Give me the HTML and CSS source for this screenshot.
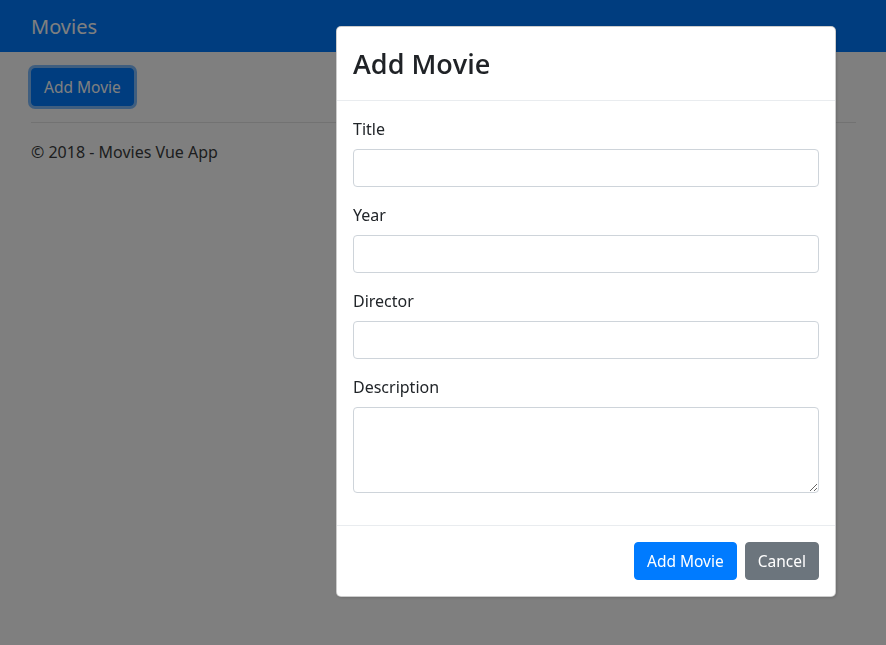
FILE: index.html
```html
<!DOCTYPE html>
<html lang="en">
<head>
<meta charset="utf-8">
<title>Movies Vue App</title>
<link rel="stylesheet" href="styles.css">
</head>
<body>
<nav class="navbar">
  <span class="brand">Movies</span>
</nav>
<main class="page">
  <button class="btn btn-primary btn-focus" type="button">Add Movie</button>
  <hr class="rule">
  <footer class="footer">© 2018 - Movies Vue App</footer>
</main>

<div class="backdrop"></div>
<div class="modal">
  <div class="modal-content">
    <div class="modal-header">
      <h2 class="modal-title">Add Movie</h2>
    </div>
    <form class="modal-body">
      <div class="form-group">
        <label class="label" for="title">Title</label>
        <input class="control" id="title" type="text">
      </div>
      <div class="form-group">
        <label class="label" for="year">Year</label>
        <input class="control" id="year" type="text">
      </div>
      <div class="form-group">
        <label class="label" for="director">Director</label>
        <input class="control" id="director" type="text">
      </div>
      <div class="form-group">
        <label class="label" for="description">Description</label>
        <textarea class="control area" id="description"></textarea>
      </div>
    </form>
    <div class="modal-footer">
      <button class="btn btn-primary" type="button">Add Movie</button>
      <button class="btn btn-secondary" type="button">Cancel</button>
    </div>
  </div>
</div>
</body>
</html>
```

FILE: styles.css
```css
* { box-sizing: border-box; }

html, body {
  margin: 0;
  height: 100%;
}

body {
  font-family: "Noto Sans", "Open Sans", Arial, sans-serif;
  font-size: 16px;
  line-height: 24px;
  color: #212529;
  background: #fff;
}

.navbar {
  height: 52px;
  background: #007bff;
  display: flex;
  align-items: center;
  padding: 0 31px;
}

.brand {
  font-size: 20px;
  color: #fff;
  line-height: 30px;
  padding-top: 1px;
}

.page {
  padding: 16px 30px 0 30px;
}

.btn {
  font-family: inherit;
  font-size: 15.5px;
  line-height: 24px;
  padding: 6px 12px;
  border: 1px solid transparent;
  border-radius: 4px;
  color: #fff;
  cursor: pointer;
}

.btn-primary {
  background: #007bff;
  border-color: #007bff;
}

.btn-secondary {
  background: #6c757d;
  border-color: #6c757d;
}

.btn-focus {
  box-shadow: 0 0 0 3px rgba(0, 123, 255, 0.5);
  margin-left: 1px;
}

.rule {
  margin: 16px 0 16px 1px;
  border: 0;
  border-top: 1px solid rgba(0, 0, 0, 0.1);
}

.footer {
  line-height: 24px;
  padding-top: 1px;
  padding-left: 1px;
  color: #3a3d40;
}

.backdrop {
  position: fixed;
  inset: 0;
  background: rgba(0, 0, 0, 0.5);
}

.modal {
  position: fixed;
  top: 26px;
  left: 336px;
  width: 500px;
}

.modal-content {
  background: #fff;
  border: 1px solid rgba(0, 0, 0, 0.2);
  border-radius: 5px;
  box-shadow: 1px 1px 3px rgba(0, 0, 0, 0.15);
}

.modal-header {
  padding: 16px;
  border-bottom: 1px solid #e9ecef;
}

.modal-title {
  margin: 0;
  font-family: "Open Sans", "Noto Sans", sans-serif;
  font-size: 27px;
  font-weight: 600;
  line-height: 41px;
  color: #1f2226;
}

.modal-body {
  padding: 16px;
  margin: 0;
}

.form-group {
  margin-bottom: 16px;
}

.label {
  display: block;
  margin-bottom: 8px;
  line-height: 24px;
}

.control {
  display: block;
  width: 100%;
  height: 38px;
  padding: 6px 12px;
  font-family: inherit;
  font-size: 16px;
  line-height: 24px;
  color: #495057;
  background: #fff;
  border: 1px solid #ced4da;
  border-radius: 4px;
}

.area {
  height: 86px;
  resize: vertical;
}

.modal-footer {
  display: flex;
  justify-content: flex-end;
  gap: 8px;
  padding: 16px;
  border-top: 1px solid #e9ecef;
}
```
